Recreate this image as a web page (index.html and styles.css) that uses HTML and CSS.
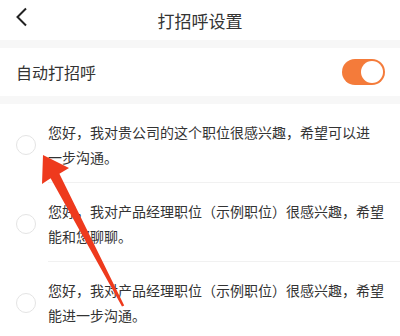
FILE: index.html
```html
<!DOCTYPE html>
<html lang="zh">
<head>
    <meta charset="utf-8">
    <title>打招呼设置</title>
    <link rel="stylesheet" href="styles.css">
</head>
<body>
    <div class="page">
        <div class="top-bar">
            <svg class="back" width="14" height="20" viewBox="0 0 14 20">
                <polyline points="11,1.5 2.5,10 11,18.5" fill="none" stroke="#222" stroke-width="2"/>
            </svg>
            <p class="title">打招呼设置</p>
        </div>
        <div class="band"></div>
        <div class="switch-row">
            <p class="switch-label">自动打招呼</p>
            <div class="switch"><div class="knob"></div></div>
        </div>
        <div class="band"></div>
        <div class="list">
            <div class="item">
                <div class="radio"></div>
                <p class="msg">您好，我对贵公司的这个职位很感兴趣，希望可以进<br>一步沟通。</p>
            </div>
            <div class="item">
                <div class="radio"></div>
                <p class="msg">您好，我对产品经理职位（示例职位）很感兴趣，希望<br>能和您聊聊。</p>
            </div>
            <div class="item">
                <div class="radio"></div>
                <p class="msg">您好，我对产品经理职位（示例职位）很感兴趣，希望<br>能进一步沟通。</p>
            </div>
        </div>

        <svg class="arrow" width="400" height="336" viewBox="0 0 400 336">
            <polygon points="43,155 69,168 59.4,173.7 124.2,305.6 122,306.6 50.6,178.3 42,184" fill="#ee3a1d"/>
        </svg>
    </div>
</body>
</html>
```

FILE: styles.css
```css
p{
    margin: 0;
}
body{
    margin: 0;
    background-color: #fff;
    font-family: "Noto Sans CJK SC", "Noto Sans", sans-serif;
    color: #333;
}
.page{
    position: relative;
    width: 400px;
    height: 336px;
    overflow: hidden;
}
.top-bar{
    height: 40px;
    display: flex;
    align-items: center;
    justify-content: center;
    position: relative;
}
.back{
    position: absolute;
    left: 15px;
    top: 7px;
}
.title{
    font-size: 17px;
    line-height: 40px;
    color: #333;
    padding-top: 1px;
}
.band{
    height: 8px;
    background-color: #f7f7f7;
}
.switch-row{
    height: 48px;
    display: flex;
    align-items: center;
    justify-content: space-between;
    padding: 0 15px 0 16px;
}
.switch-label{
    font-size: 16px;
    color: #333;
}
.switch{
    width: 43px;
    height: 26px;
    border-radius: 13px;
    background-color: #f47b3a;
    display: flex;
    align-items: center;
    justify-content: flex-end;
    padding-right: 2px;
    box-sizing: border-box;
}
.knob{
    width: 22px;
    height: 22px;
    border-radius: 50%;
    background-color: #fff;
}
.item{
    display: flex;
    align-items: center;
    padding: 16px 8px 12px 16px;
    position: relative;
}
.item + .item::before{
    content: "";
    position: absolute;
    left: 48px;
    right: 0;
    top: -1px;
    height: 1px;
    background-color: #f1f1f1;
}
.item + .item{
    margin-top: 1px;
}
.radio{
    width: 20px;
    height: 20px;
    border-radius: 50%;
    border: 1px solid #e4e4e4;
    box-sizing: border-box;
    margin-right: 12px;
    flex-shrink: 0;
}
.msg{
    font-size: 14px;
    line-height: 25px;
    color: #333;
    white-space: nowrap;
}
.arrow{
    position: absolute;
    left: 0;
    top: 0;
}
```
